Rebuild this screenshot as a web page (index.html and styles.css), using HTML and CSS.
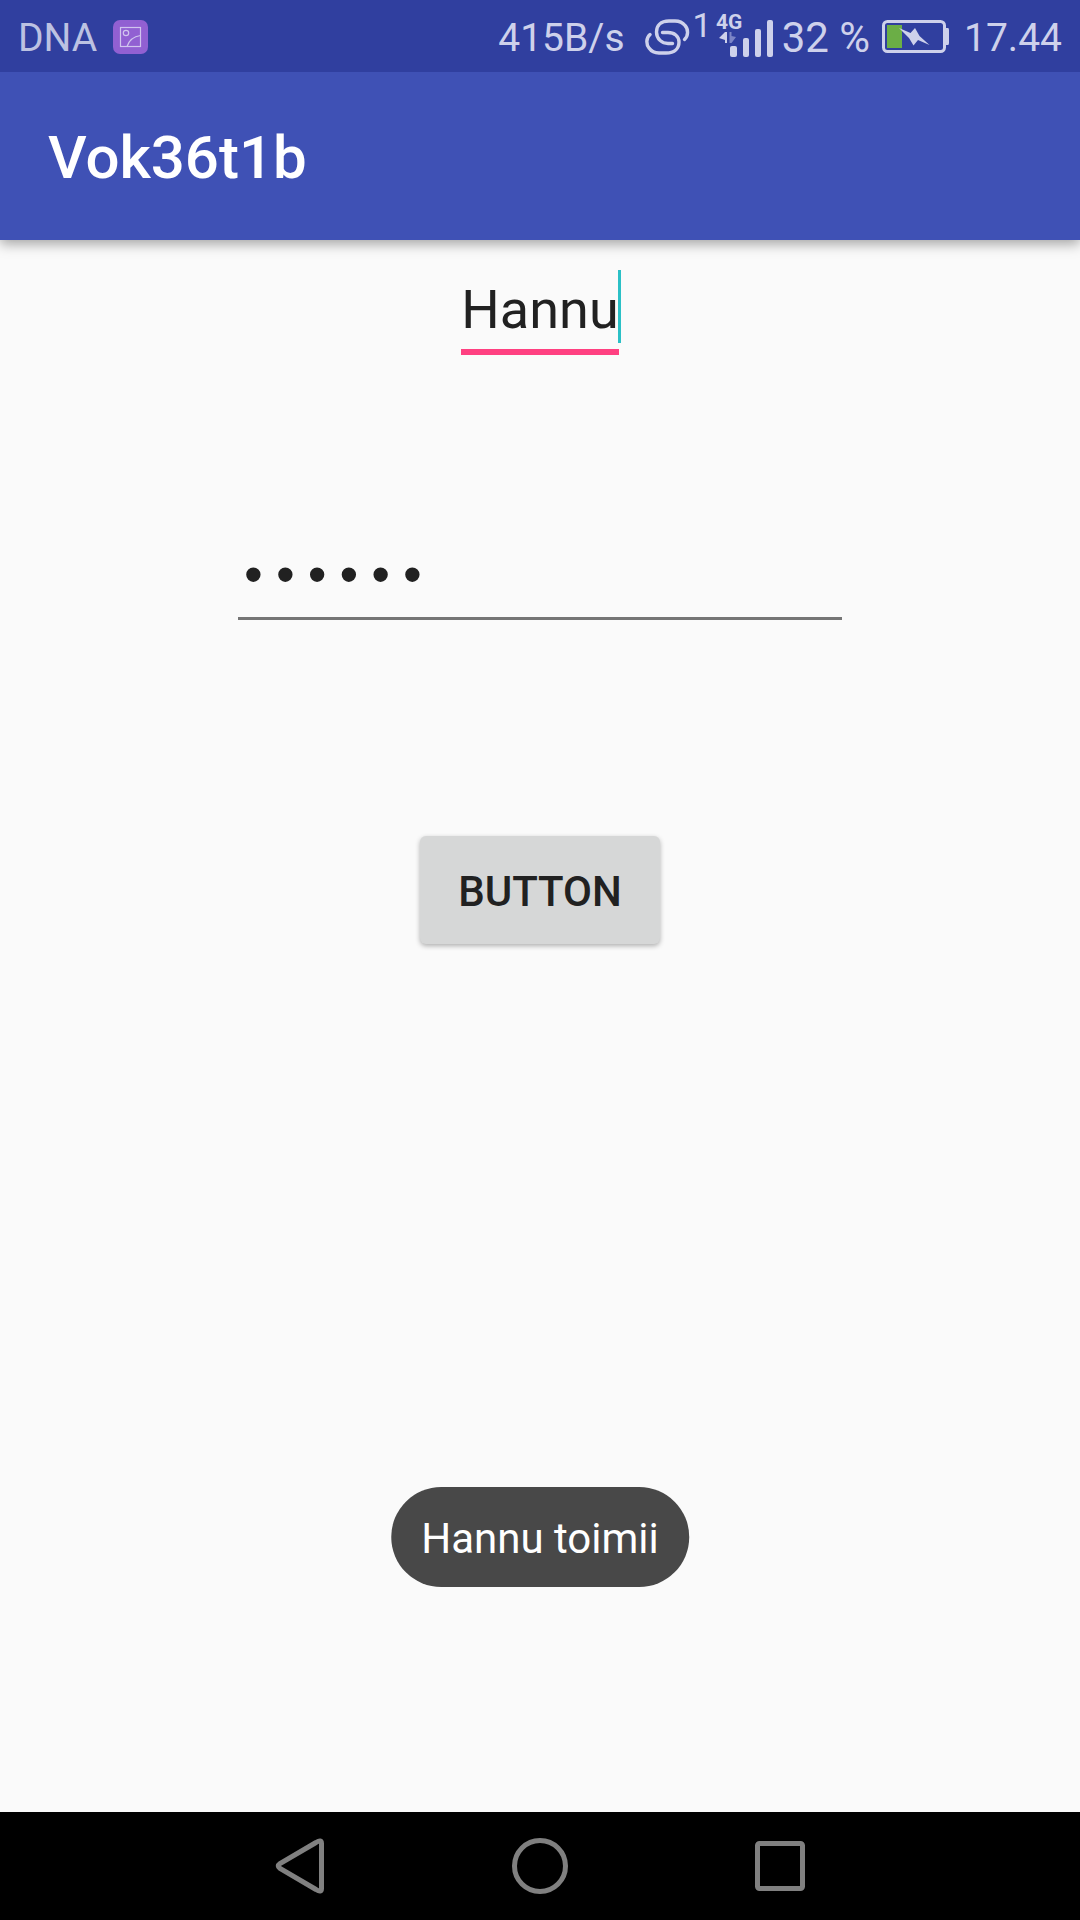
FILE: index.html
```html
<!DOCTYPE html>
<html lang="fi">
<head>
<meta charset="utf-8">
<meta name="viewport" content="width=device-width, initial-scale=1">
<title>Vok36t1b</title>
<link rel="stylesheet" href="styles.css">
</head>
<body>
<div class="screen">
  <div class="status-bar">
    <div class="status-left">
      <span class="carrier">DNA</span>
      <svg class="icon" width="35" height="34" viewBox="0 0 35 34" aria-hidden="true">
        <rect width="35" height="34" rx="7" fill="#9160d2"/>
        <g fill="none" stroke="#d0c4ee" stroke-width="1.2">
          <rect x="7.5" y="7.5" width="20" height="19"/>
          <circle cx="13" cy="13" r="2.7"/>
          <path d="M14 26.500Q17 17 27.500 15.500"/>
        </g>
      </svg>
    </div>
    <div class="status-right">
      <span class="speed">415B/s</span>
      <svg class="icon link-icon" width="46" height="36" viewBox="0 0 46 36" fill="none" stroke="#ced1eb" stroke-width="3.4" stroke-linecap="round" aria-hidden="true">
        <path d="M39.500 20.500C43.500 17 43.500 10 40 6.500Q36.500 2 30 2H24C15.500 2 11.500 7 11.500 13C11.500 20 17 24.500 23 24.500H27.500"/>
        <path d="M5 15.500C1 19 1 25 4 29Q7.500 34 14 34H21C30 34 34 29 34 23C34 17 29 13.500 23 13.500H17.500"/>
      </svg>
      <span class="sim">1</span>
      <svg class="icon signal" width="58" height="55" viewBox="0 0 58 55" fill="#ced1eb" aria-label="4G">
        <text class="network" x="0" y="27">4G</text>
        <path d="M3 36 9 30H11V41H9V38Z"/>
        <path d="M13.500 30H15.500V34L20 35 15.500 41H13.500Z" fill="#7c85c7"/>
        <rect x="14" y="44" width="7" height="11" rx="2"/>
        <rect x="27" y="36" width="6" height="19" rx="2"/>
        <rect x="39" y="27" width="6" height="28" rx="2"/>
        <rect x="51" y="18" width="6" height="37" rx="2"/>
      </svg>
      <span class="percent">32 %</span>
      <svg class="icon battery" width="68" height="34" viewBox="0 0 68 34" aria-hidden="true">
        <rect x="1.500" y="1.500" width="61" height="30" rx="4" fill="none" stroke="#ced1eb" stroke-width="3"/>
        <path d="M64 8h2q1 0 1 2v13q0 2-1 2h-2z" fill="#ced1eb"/>
        <rect x="5" y="5" width="15" height="23" fill="#6bae46"/>
        <path d="M17 8 28.500 13 33 8 37.500 16 47.500 25 36 20 31.500 25.500 27 18Z" fill="#ced1eb"/>
      </svg>
      <span class="clock">17.44</span>
    </div>
  </div>

  <header class="app-bar">
    <h1 class="title">Vok36t1b</h1>
  </header>

  <main class="content">
    <form class="form">
      <div class="name-field">
        <input class="name-input" type="text" value="Hannu" size="5" aria-label="Name">
        <span class="cursor"></span>
      </div>
      <input class="password-input" type="password" value="salain" aria-label="Password">
      <button class="submit" type="button">BUTTON</button>
    </form>
    <div class="toast" role="status">Hannu toimii</div>
  </main>

  <nav class="nav-bar">
    <button class="nav-button" type="button" aria-label="Back">
      <svg class="icon" width="60" height="60" viewBox="0 0 60 60"><path d="M46 6.500Q51.500 3 51.500 7.500V52.500Q51.500 57 46 53.500L10 32.500Q6.500 30 10 27.500Z"/></svg>
    </button>
    <button class="nav-button" type="button" aria-label="Home">
      <svg class="icon" width="60" height="60" viewBox="0 0 60 60"><circle cx="30" cy="30" r="25.500"/></svg>
    </button>
    <button class="nav-button" type="button" aria-label="Recent apps">
      <svg class="icon" width="60" height="60" viewBox="0 0 60 60"><rect x="7.500" y="7.500" width="45" height="45" rx="2"/></svg>
    </button>
  </nav>
</div>
</body>
</html>
```
FILE: styles.css
```css
* {
  box-sizing: border-box;
}

body {
  margin: 0;
  font-family: Roboto, "Liberation Sans", sans-serif;
  background: #fafafa;
  color: #212121;
}

input,
button {
  margin: 0;
  padding: 0;
  border: 0;
  outline: 0;
  font: inherit;
  color: inherit;
}

.icon {
  display: block;
  flex: none;
}

.screen {
  display: flex;
  flex-direction: column;
  min-height: 100vh;
}

.status-bar {
  position: relative;
  z-index: 1;
  display: flex;
  justify-content: space-between;
  height: 72px;
  padding: 2px 18px 0;
  background: #303f9f;
  color: #ced1eb;
  font-size: 39px;
  line-height: 72px;
  white-space: nowrap;
}

.status-left,
.status-right {
  display: flex;
  align-items: center;
}

.carrier {
  margin-right: 16px;
  color: #bcc2e2;
}

.speed,
.clock,
.carrier,
.percent {
  padding-top: 2px;
}

.link-icon {
  margin-left: 20px;
}

.sim {
  align-self: flex-start;
  margin-left: 2px;
  font-size: 34px;
  line-height: 46px;
}

.signal {
  align-self: flex-start;
  margin: 0 8px 0 4px;
}

.network {
  font-size: 21px;
  font-weight: 700;
}

.percent {
  font-size: 42px;
}

.battery {
  margin: 0 14px 0 12px;
}

.app-bar {
  position: relative;
  display: flex;
  align-items: center;
  height: 168px;
  padding: 4px 48px 0;
  background: #3f51b5;
  box-shadow: 0 4px 12px rgba(0, 0, 0, 0.35);
}

.title {
  margin: 0;
  color: #fff;
  font-size: 60px;
  font-weight: 500;
  line-height: 72px;
}

.content {
  position: relative;
  flex: 1;
  padding: 30px 24px;
}

.form {
  display: flex;
  flex-direction: column;
  align-items: center;
}

.name-field {
  position: relative;
  display: flex;
}

.name-input,
.password-input {
  background: transparent;
}

.name-input {
  field-sizing: content;
  height: 85px;
  border-bottom: 6px solid #ff4081;
  font-size: 54px;
}

.cursor {
  position: absolute;
  top: 0;
  right: -2px;
  width: 3px;
  height: 73px;
  background: #2bc0c6;
}

.password-input {
  width: 56vw;
  height: 85px;
  margin-top: 180px;
  padding-top: 6px;
  border-bottom: 3px solid #757575;
  font-family: "Liberation Mono", monospace;
  font-size: 53px;
}

.submit {
  width: 240px;
  height: 108px;
  margin-top: 216px;
  padding-top: 2px;
  border-radius: 6px;
  background: #d6d7d7;
  box-shadow: 0 2px 5px rgba(0, 0, 0, 0.3);
  font-size: 42px;
  font-weight: 500;
}

.toast {
  position: absolute;
  bottom: 225px;
  left: 50%;
  transform: translateX(-50%);
  padding: 27px 30px 23px;
  border-radius: 50px;
  background: #484848;
  color: #fff;
  font-size: 42px;
  line-height: 50px;
  white-space: nowrap;
}

.nav-bar {
  display: flex;
  justify-content: center;
  gap: 90px;
  height: 108px;
  background: #000;
}

.nav-button {
  display: grid;
  place-items: center;
  width: 150px;
  background: transparent;
  fill: none;
  stroke: #808080;
  stroke-width: 5;
}
```
